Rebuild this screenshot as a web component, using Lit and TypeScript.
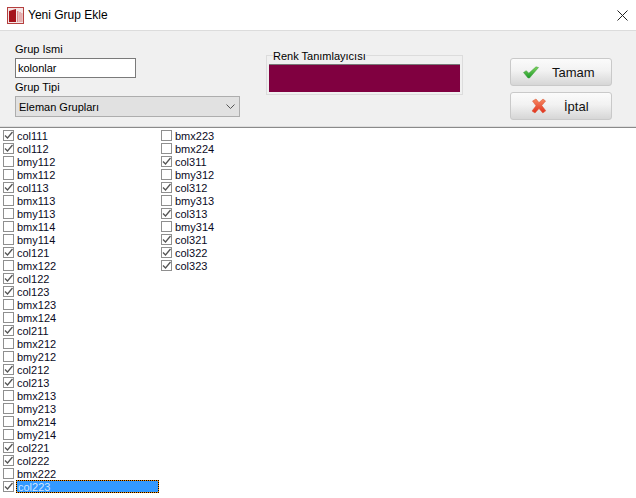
import { LitElement, html, css, svg } from 'lit';
import { customElement, state } from 'lit/decorators.js';

interface GroupItem {
  name: string;
  checked: boolean;
}

// names starting with col are the ticked ones in this dialog
const NAMES = [
  'col111', 'col112', 'bmy112', 'bmx112', 'col113', 'bmx113', 'bmy113', 'bmx114', 'bmy114', 'col121',
  'bmx122', 'col122', 'col123', 'bmx123', 'bmx124', 'col211', 'bmx212', 'bmy212', 'col212', 'col213',
  'bmx213', 'bmy213', 'bmx214', 'bmy214', 'col221', 'col222', 'bmx222', 'col223',
  'bmx223', 'bmx224', 'col311', 'bmy312', 'col312', 'bmy313', 'col313', 'bmy314', 'col321', 'col322', 'col323',
];

const appIcon = svg`<svg class="app-icon" width="17" height="17" viewBox="0 0 17 17">
  <rect x="0.5" y="0.5" width="16" height="16" fill="#f4e6e6" stroke="#b5403f"/>
  <path d="M2 15V4l7-2v13z" fill="#a5121b"/>
  <path d="M10 15V4h1.4v11zM12.4 15V5h1.2v10zM14.4 15V6h1v9z" fill="#d98a8a"/>
</svg>`;

const checkIcon = svg`<svg width="16" height="13" viewBox="0 0 16 13">
  <defs><linearGradient id="okFill" x1="0" y1="0" x2="0" y2="1">
    <stop offset="0" stop-color="#7cd35a"/><stop offset="1" stop-color="#1f9a2c"/>
  </linearGradient></defs>
  <path d="M0.500 6.500l2.800-1.800 2.500 2.500L13 0.800l2.500 .7L6.500 12H5z" fill="url(#okFill)" stroke="#3c9a3c" stroke-width=".5"/>
</svg>`;

const crossIcon = svg`<svg width="16" height="16" viewBox="0 0 16 16">
  <defs><linearGradient id="noFill" x1="0" y1="0" x2="0" y2="1">
    <stop offset="0" stop-color="#f78a62"/><stop offset="1" stop-color="#e0301e"/>
  </linearGradient></defs>
  <path d="M1.500 3L5 1l3 3.600L12 1l2.600 2-3.800 4.600 4 5.200-3 2.200L8 10.600 4 15l-3-2 4-5.200z" fill="url(#noFill)" stroke="#d9512f" stroke-width=".5"/>
</svg>`;

@customElement('app-root')
export class AppRoot extends LitElement {
  @state()
  items: GroupItem[] = NAMES.map(name => ({ name, checked: name.startsWith('col') }));

  static styles = css`
    :host {
      display: block;
      width: 636px;
      height: 498px;
      overflow: hidden;
      background: #fff;
      font-family: 'Liberation Sans', Arial, sans-serif;
      font-size: 11px;
      color: #000;
    }

    .title-bar {
      height: 30px;
      display: flex;
      align-items: center;
      padding: 0 8px 0 7px;
      border-bottom: 1px solid #dcdcdc;
    }

    .app-icon {
      margin-right: 4px;
    }

    .title {
      flex: 1;
      font-size: 12px;
    }

    .panel {
      height: 96px;
      box-sizing: border-box;
      display: flex;
      padding: 11px 24px 0 15px;
      background: #f0f0f0;
      border-bottom: 1px solid #dedede;
    }

    .fields {
      width: 225px;
      display: flex;
      flex-direction: column;
    }

    .label {
      height: 16px;
      padding-top: 1px;
      box-sizing: border-box;
      line-height: 13px;
    }

    .text-input {
      width: 121px;
      height: 20px;
      box-sizing: border-box;
      border: 1px solid #7a7a7a;
      background: #fff;
      padding: 0 2px;
      line-height: 18px;
      margin-bottom: 3px;
    }

    .fields .label.tipi {
      height: 15px;
      padding-top: 0;
    }

    .select {
      height: 21px;
      box-sizing: border-box;
      border: 1px solid #adadad;
      background: #e1e1e1;
      padding: 0 4px 0 3px;
      display: flex;
      align-items: center;
      justify-content: space-between;
    }

    .color-group {
      position: relative;
      width: 197px;
      height: 40px;
      margin: 13px 47px 0 26px;
      box-sizing: border-box;
      border: 1px solid #dcdcdc;
      padding: 8px 2px 2px 2px;
    }

    .color-group .legend {
      position: absolute;
      top: -6px;
      left: 6px;
      background: #f0f0f0;
      line-height: 13px;
    }

    .swatch {
      height: 100%;
      box-sizing: border-box;
      background: #800040;
      border-top: 1px solid #777;
    }

    .buttons {
      display: flex;
      flex-direction: column;
      gap: 6px;
      margin-top: 16px;
    }

    .btn {
      width: 102px;
      height: 28px;
      box-sizing: border-box;
      border: 1px solid #c9c9c9;
      border-radius: 3px;
      background: linear-gradient(#fbfbfb 0%, #f2f2f2 45%, #d6d6d6 100%);
      display: flex;
      align-items: center;
      font-size: 13px;
      color: #111;
    }

    .btn svg {
      flex: none;
    }

    .btn.ok svg {
      margin: 0 13px 0 12px;
    }

    .btn.cancel svg {
      margin: 0 17px 0 20px;
    }

    .list-rule {
      height: 1px;
      background: #8a8a8a;
    }

    .list {
      display: grid;
      grid-auto-flow: column;
      grid-template-rows: repeat(28, 13px);
      grid-template-columns: repeat(2, 158px);
      padding: 1px 0 0 3px;
    }

    .item {
      display: flex;
      align-items: center;
      height: 13px;
      margin-right: 2px;
      white-space: nowrap;
    }

    .box {
      width: 11px;
      height: 11px;
      flex: none;
      box-sizing: border-box;
      border: 1px solid #8f8f8f;
      background: #fff;
      margin-right: 2px;
    }

    .box svg {
      display: block;
    }

    .name {
      flex: 1;
      height: 13px;
      padding: 1px 0 0 1px;
      line-height: 12px;
      box-sizing: border-box;
      color: #0a0a1e;
    }

    .item.selected .name {
      padding-left: 2px;
      background: #3399ff;
      color: #cfe6ff;
      box-shadow: inset 0 0 0 1px #ff9000;
      outline: 1px dotted #000;
      outline-offset: -1px;
    }
  `;

  private renderItem(item: GroupItem, index: number) {
    const selected = index === 27;
    return html`
      <div class="item ${selected ? 'selected' : ''}">
        <span class="box">
          ${item.checked
            ? svg`<svg width="9" height="9" viewBox="0 0 9 9"><path d="M1 4.500l2.500 2.500L8.500 1" fill="none" stroke="#555" stroke-width="1.300"/></svg>`
            : null}
        </span>
        <span class="name">${item.name}</span>
      </div>
    `;
  }

  render() {
    return html`
      <div class="title-bar">
        ${appIcon}
        <span class="title">Yeni Grup Ekle</span>
        <svg width="11" height="11" viewBox="0 0 11 11"><path d="M.5.500l10 10M10.500.500l-10 10" stroke="#222" fill="none"/></svg>
      </div>
      <div class="panel">
        <div class="fields">
          <div class="label">Grup Ismi</div>
          <div class="text-input">kolonlar</div>
          <div class="label tipi">Grup Tipi</div>
          <div class="select">
            <span>Eleman Grupları</span>
            <svg width="9" height="6" viewBox="0 0 9 6"><path d="M.5.500l4 4 4-4" fill="none" stroke="#555"/></svg>
          </div>
        </div>
        <div class="color-group">
          <span class="legend">Renk Tanımlayıcısı</span>
          <div class="swatch"></div>
        </div>
        <div class="buttons">
          <div class="btn ok">${checkIcon}<span>Tamam</span></div>
          <div class="btn cancel">${crossIcon}<span>İptal</span></div>
        </div>
      </div>
      <div class="list-rule"></div>
      <div class="list">${this.items.map((item, i) => this.renderItem(item, i))}</div>
    `;
  }
}
